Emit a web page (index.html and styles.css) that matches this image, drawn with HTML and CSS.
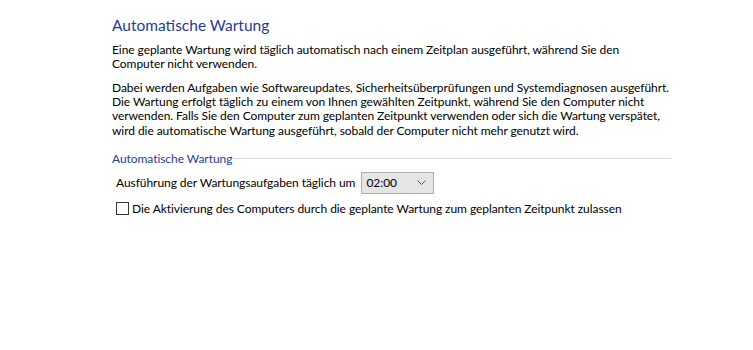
FILE: index.html
```html
<!DOCTYPE html>
<html lang="de">
<head>
<meta charset="utf-8">
<link rel="stylesheet" href="styles.css">
</head>
<body>
<main class="page">
  <h1 class="title">Automatische Wartung</h1>
  <p class="para">Eine geplante Wartung wird täglich automatisch nach einem Zeitplan ausgeführt, während Sie den<br>Computer nicht verwenden.</p>
  <p class="para">Dabei werden Aufgaben wie Softwareupdates, Sicherheitsüberprüfungen und Systemdiagnosen ausgeführt.<br>Die Wartung erfolgt täglich zu einem von Ihnen gewählten Zeitpunkt, während Sie den Computer nicht<br>verwenden. Falls Sie den Computer zum geplanten Zeitpunkt verwenden oder sich die Wartung verspätet,<br>wird die automatische Wartung ausgeführt, sobald der Computer nicht mehr genutzt wird.</p>
  <section class="group">
    <div class="group-head">
      <span class="group-label">Automatische Wartung</span>
      <span class="group-line"></span>
    </div>
    <div class="row">
      <span class="row-label">Ausführung der Wartungsaufgaben täglich um</span>
      <div class="combo">
        <span class="combo-value">02:00</span>
        <svg class="chev" width="9" height="5" viewBox="0 0 9 5"><path d="M0.5 0.5 L4.5 4.5 L8.5 0.5" fill="none" stroke="#555" stroke-width="1"/></svg>
      </div>
    </div>
    <label class="check-row">
      <span class="box"></span>
      <span class="check-label">Die Aktivierung des Computers durch die geplante Wartung zum geplanten Zeitpunkt zulassen</span>
    </label>
  </section>
</main>
</body>
</html>
```
FILE: styles.css
```css
html, body {
  margin: 0;
  padding: 0;
  background: #ffffff;
}
body {
  font-family: Lato, "Noto Sans", sans-serif;
  font-size: 12px;
  letter-spacing: -0.06px;
  color: #000000;
}
.page {
  width: 600px;
  padding: 14px 0 0 112px;
}
.title {
  margin: 0 0 7px 0;
  font-size: 15.5px;
  letter-spacing: 0;
  font-weight: normal;
  color: #1e3c9a;
  line-height: 22px;
}
.para {
  margin: 0 0 9px 0;
  line-height: 14.33px;
  white-space: nowrap;
}
.group {
  width: 559px;
  margin-top: 14px;
}
.group-head {
  display: flex;
  align-items: center;
}
.group-label {
  color: #1e3c9a;
  line-height: 14px;
}
.group-line {
  flex: 1;
  height: 1px;
  background: #d5dfe5;
  margin-left: 1px;
}
.row {
  display: flex;
  align-items: center;
  gap: 6px;
  margin: 6px 0 0 4px;
}
.combo {
  width: 73px;
  height: 22px;
  box-sizing: border-box;
  border: 1px solid #adadad;
  background: #e5e5e5;
  display: flex;
  align-items: center;
  justify-content: space-between;
  padding: 0 7px 0 4px;
}
.check-row {
  display: flex;
  align-items: center;
  gap: 3px;
  margin: 7px 0 0 4px;
  line-height: 15px;
}
.box {
  width: 13px;
  height: 13px;
  box-sizing: border-box;
  border: 1px solid #333333;
  background: #fff;
}
```
